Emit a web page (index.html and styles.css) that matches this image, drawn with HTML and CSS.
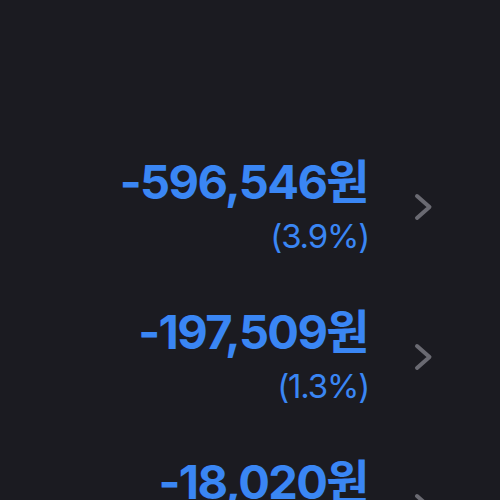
FILE: index.html
```html
<!DOCTYPE html>
<html>
<head>
  <title>손익</title>
  <link rel="stylesheet" href="styles.css">
</head>
<body>
  <div class="list">
    <div class="row">
      <div class="values">
        <div class="amount">-596,546원</div>
        <div class="rate">(3.9%)</div>
      </div>
      <svg class="chevron" width="22" height="30" viewBox="0 0 22 30"><path d="M4 4 L16.5 15 L4 26" fill="none" stroke="#6a6a72" stroke-width="4" stroke-linecap="round" stroke-linejoin="round"/></svg>
    </div>
    <div class="row">
      <div class="values">
        <div class="amount">-197,509원</div>
        <div class="rate">(1.3%)</div>
      </div>
      <svg class="chevron" width="22" height="30" viewBox="0 0 22 30"><path d="M4 4 L16.5 15 L4 26" fill="none" stroke="#6a6a72" stroke-width="4" stroke-linecap="round" stroke-linejoin="round"/></svg>
    </div>
    <div class="row">
      <div class="values">
        <div class="amount">-18,020원</div>
        <div class="rate">(0.1%)</div>
      </div>
      <svg class="chevron" width="22" height="30" viewBox="0 0 22 30"><path d="M4 4 L16.5 15 L4 26" fill="none" stroke="#6a6a72" stroke-width="4" stroke-linecap="round" stroke-linejoin="round"/></svg>
    </div>
  </div>
</body>
</html>
```

FILE: styles.css
```css
html, body {
  margin: 0;
  height: 100%;
  background-color: #1b1b21;
  overflow: hidden;
}
body {
  font-family: Inter, "Noto Sans CJK KR", sans-serif;
}
.list {
  padding-top: 130px;
  padding-right: 65px;
  display: flex;
  flex-direction: column;
}
.row {
  display: flex;
  align-items: center;
  justify-content: flex-end;
  height: 150px;
}
.values {
  display: flex;
  flex-direction: column;
  align-items: flex-end;
  color: #3a86f4;
}
.amount {
  font-size: 47px;
  font-weight: 700;
  line-height: 54px;
  letter-spacing: -1.6px;
  margin-right: -2px;
}
.rate {
  font-size: 33px;
  line-height: 40px;
  margin-top: 7px;
  letter-spacing: -1.2px;
  margin-right: -3px;
}
.chevron {
  margin-left: 47px;
  margin-top: 4px;
}
```
